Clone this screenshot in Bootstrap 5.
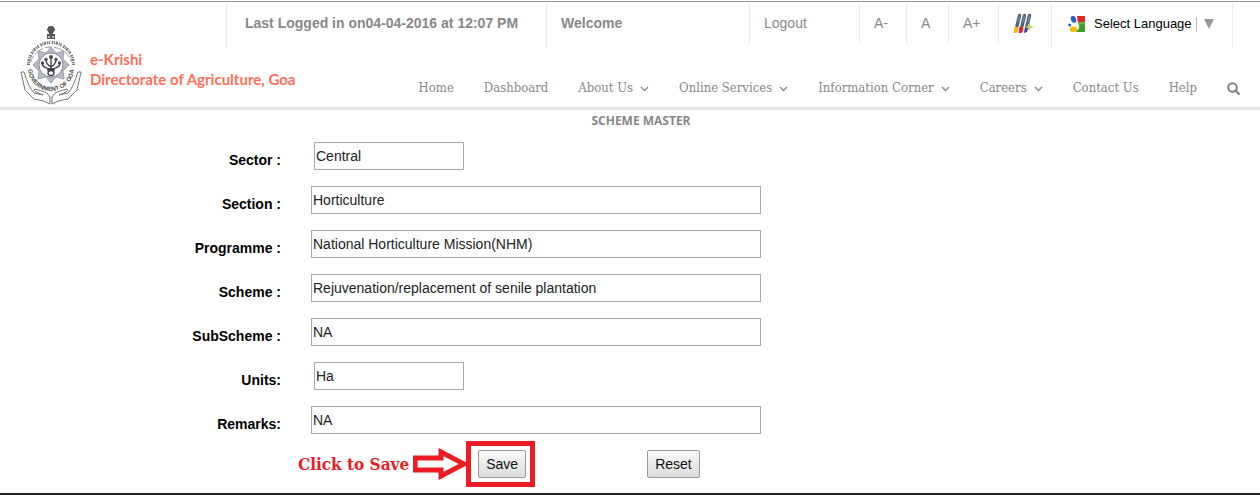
<!DOCTYPE html>
<html lang="en">
<head>
<meta charset="utf-8">
<meta name="viewport" content="width=device-width, initial-scale=1">
<title>e-Krishi - Scheme Master</title>
<link rel="stylesheet" href="https://cdn.jsdelivr.net/npm/bootstrap@5.3.0/dist/css/bootstrap.min.css">
<style>
body{font-family:"Liberation Sans",Arial,sans-serif;font-size:14px;line-height:20px;color:#000;background:#fff;padding-top:1px}
.page-frame{border-top:1px solid #999;border-bottom:2px solid #222;min-height:calc(100vh - 1px)}
.site-head{border-bottom:3px solid #e5e5e5}
.topbar{padding:1px 27px 0 0;height:45px;color:#888}
.top-cell{border-left:1px solid #eaeaea;padding:10px 14px 0;height:40px;flex-shrink:0;white-space:nowrap}
.top-cell.tall{height:45px}
.top-cell a{color:#888}
.top-cell.session{padding-left:18px;width:320px}
.welcome{width:203px}
.logout{width:110px}
.cell-small{width:47px}
.cell-normal{width:42px}
.cell-large{width:50px}
.cell-theme{width:53px}
.top-cell.language{width:182px;border-right:1px solid #eaeaea;padding-left:16px;padding-top:11px;font-size:13px}
.language .divider{width:1px;height:15px;background:#bbb;margin:0 7px 0 4px}
.brand{color:#ff7058;font:bold 15px/20px Lato,sans-serif;margin-top:-21px;padding-left:20px}
.brand:hover{color:#ff7058}
.brand-name{padding-top:23px}
.main-nav{font:13px/20px "DejaVu Serif Condensed","DejaVu Serif",serif;gap:30px;padding:31px 20px 9px 0}
.main-nav a{color:#888}
.main-nav svg{margin-left:7px}
.main-nav .search svg{margin:0}
.page-title{font:bold 12px/20px "Open Sans",sans-serif;color:#888;padding:1px 0 0 22px}
.scheme-form{padding:11px 4px 0 0}
.field-row{height:28px;margin-bottom:16px}
.field-row label{font-weight:bold;padding:8px 33px 0 0}
.field-row input{height:28px;border:1px solid #a9a9a9;padding:0 1px;width:150px;color:#222}
.field-row input.wide{width:450px;margin-left:-3px}
.plain-btn{height:28px;border:1px solid #999;border-radius:2px;background:linear-gradient(#f8f8f8,#ddd);color:#111;padding:0 7px}
.action-row{margin-top:-9px}
.action-group{margin-left:-16px}
.hint{color:#ed1c24;font:bold 17px/24px "DejaVu Serif Condensed","DejaVu Serif",serif}
.save-ring{border:5px solid #ed1c24;padding:4px 4px 4px 7px}
.reset{margin-left:112px}
</style>
<script src="https://cdn.jsdelivr.net/npm/bootstrap@5.3.0/dist/js/bootstrap.bundle.min.js"></script>
</head>
<body>
<div class="page-frame">
<header class="site-head">
  <div class="topbar d-flex justify-content-end">
    <div class="top-cell tall session fw-bold">Last Logged in on04-04-2016 at 12:07 PM</div>
    <div class="top-cell tall welcome fw-bold">Welcome</div>
    <div class="top-cell logout"><a href="#" class="text-decoration-none">Logout</a></div>
    <div class="top-cell cell-small"><a href="#" class="text-decoration-none">A-</a></div>
    <div class="top-cell cell-normal"><a href="#" class="text-decoration-none">A</a></div>
    <div class="top-cell cell-large"><a href="#" class="text-decoration-none">A+</a></div>
    <div class="top-cell cell-theme">
      <a href="#" aria-label="Themes"><svg width="20" height="20" viewBox="0 0 20 20" class="d-block">
        <g stroke-linecap="round" fill="none"><path d="M6.500 2.500 4 13M11.500 2.500 9 13M16.500 2.500 14 13" stroke="#4f6478" stroke-width="3.400"/><path d="M6.500 3 5 9M11.500 3 10 9M16.500 3 15 9" stroke="#7d91a3" stroke-width="1"/></g>
        <path d="M2 14l3 1-1 4-3 1z" fill="#f2b51d" stroke="#f2b51d"/><path d="M7 14l3 1-1 4-3 1z" fill="#e8232a" stroke="#e8232a"/><path d="M12 14l3 1-1 4-3 1z" fill="#3c3a9c"/>
        <path d="M16 11v6M13.500 14h6" stroke="#b5d46a" stroke-width="2"/>
      </svg></a>
    </div>
    <div class="top-cell tall language"><a href="#" class="d-flex align-items-center text-decoration-none text-black">
      <svg width="18" height="18" viewBox="0 0 18 18"><path d="M8 1h9v6h-7z" fill="#de2b25"/><path d="M10 7h7v10H8z" fill="#3a9c2b"/><path d="M10 7h7v3q-3-2-6 0z" fill="#67b83c"/><path d="M7 1h2q1 4-1 6 4 2 3 6-1 3-5 4H2l-1-5z" fill="#fff"/><ellipse cx="5.500" cy="4.300" rx="2.600" ry="3.600" transform="rotate(-20 5.500 4.300)" fill="#2864c8"/><ellipse cx="5.500" cy="14.200" rx="3.800" ry="2.700" fill="#f6b90c"/><circle cx="1.700" cy="10" r="1.500" fill="#2864c8"/></svg>
      <span class="ms-2">Select Language</span><span class="divider"></span>
      <svg width="10" height="10" viewBox="0 0 10 10"><path d="M0 0h10L5 10z" fill="#999"/></svg></a></div>
  </div>
  <div class="d-flex justify-content-between">
    <a href="#" class="brand d-flex text-decoration-none">
      <svg width="62" height="80" viewBox="0 0 62 80" aria-hidden="true">
        <defs><path id="motto" d="M8 42A23 23 0 0 0 54 42"/></defs>
        <g fill="#555"><path d="M28 1q3-2 6 0l1 3-2 3h-4l-2-3z"/><path d="M29 6h4v3h-4zM27 8h8v5h-8z"/><circle cx="29" cy="11" r="1" fill="#ddd"/><circle cx="33" cy="11" r="1" fill="#ddd"/></g>
        <path d="M8.500 39A22.500 22.500 0 0 1 53.500 39" fill="none" stroke="#777" stroke-width="3" stroke-dasharray="1.500 .7 1 .8 2 1 1 .7 1.500 1.800"/>
        <path d="M10.500 36A21.500 21.500 0 0 1 51.500 36" fill="none" stroke="#888" stroke-width=".8" stroke-dasharray="7 2 10 2"/>
        <path d="M31 21l5 6 8-2-1 8 6 6-6 6 1 8-8-2-5 6-5-6-8 2 1-8-6-6 6-6-1-8 8 2z" fill="#b8b8c6" stroke="#a0a0ae"/>
        <circle cx="31" cy="39" r="12" fill="#fff" stroke="#8a8a9c"/>
        <g fill="none" stroke="#383846" stroke-width="1.300"><path d="M31 30v13M31 43Q22 42 22 37M31 43Q40 42 40 37M31 41Q26 38 26 34M31 41Q36 38 36 34M27 44h8"/><ellipse cx="31" cy="47" rx="3" ry="2.500"/></g>
        <g fill="#484856"><circle cx="31" cy="31" r="2"/><circle cx="26" cy="33.500" r="1.700"/><circle cx="36" cy="33.500" r="1.700"/><circle cx="22.500" cy="37" r="1.700"/><circle cx="39.500" cy="37" r="1.700"/></g>
        <g fill="#fff" stroke="#777" stroke-linejoin="round"><path d="M30 78v-7q-2-5-8-6l-7-2q-2 1 1 3l7 3-9-2Q9 62 4 46L1 46l4 18 9 9q10 1 16 5z"/><path d="M32 78v-7q2-5 8-6l7-2q2 1-1 3l-7 3 9-2q5-5 10-21h3l-4 18-9 9q-10 1-16 5z"/></g>
        <text font-family="Liberation Sans" font-size="6" font-weight="bold" fill="#444"><textPath href="#motto" startOffset="50%" text-anchor="middle">GOVERNMENT OF GOA</textPath></text>
      </svg>
      <span class="brand-name ms-2">e-Krishi<br>Directorate of Agriculture, Goa</span>
    </a>
    <nav class="main-nav d-flex align-items-start text-nowrap" aria-label="Main">
      <a class="text-decoration-none" href="#">Home</a>
      <a class="text-decoration-none" href="#">Dashboard</a>
      <a class="text-decoration-none" href="#">About Us<svg width="9" height="6" viewBox="0 0 9 6"><path d="M1 1l3.500 3.500L8 1" fill="none" stroke="#888" stroke-width="1.300"/></svg></a>
      <a class="text-decoration-none" href="#">Online Services<svg width="9" height="6" viewBox="0 0 9 6"><path d="M1 1l3.500 3.500L8 1" fill="none" stroke="#888" stroke-width="1.300"/></svg></a>
      <a class="text-decoration-none" href="#">Information Corner<svg width="9" height="6" viewBox="0 0 9 6"><path d="M1 1l3.500 3.500L8 1" fill="none" stroke="#888" stroke-width="1.300"/></svg></a>
      <a class="text-decoration-none" href="#">Careers<svg width="9" height="6" viewBox="0 0 9 6"><path d="M1 1l3.500 3.500L8 1" fill="none" stroke="#888" stroke-width="1.300"/></svg></a>
      <a class="text-decoration-none" href="#">Contact Us</a>
      <a class="text-decoration-none" href="#">Help</a>
      <a class="search" href="#" aria-label="Search"><svg width="13" height="13" viewBox="0 0 13 13"><circle cx="5.500" cy="5.500" r="4.300" fill="none" stroke="#808080" stroke-width="2"/><path d="M8.500 8.500l3.500 3.500" stroke="#808080" stroke-width="2.200" stroke-linecap="round"/></svg></a>
    </nav>
  </div>
</header>
<main>
  <h1 class="page-title text-center m-0">SCHEME MASTER</h1>
  <form class="scheme-form">
    <div class="row g-0 field-row"><label for="sector" class="col-3 text-end">Sector :</label><div class="col-9"><input id="sector" type="text" value="Central"></div></div>
    <div class="row g-0 field-row"><label for="section" class="col-3 text-end">Section :</label><div class="col-9"><input id="section" class="wide" type="text" value="Horticulture"></div></div>
    <div class="row g-0 field-row"><label for="programme" class="col-3 text-end">Programme :</label><div class="col-9"><input id="programme" class="wide" type="text" value="National Horticulture Mission(NHM)"></div></div>
    <div class="row g-0 field-row"><label for="scheme" class="col-3 text-end">Scheme :</label><div class="col-9"><input id="scheme" class="wide" type="text" value="Rejuvenation/replacement of senile plantation"></div></div>
    <div class="row g-0 field-row"><label for="subscheme" class="col-3 text-end">SubScheme :</label><div class="col-9"><input id="subscheme" class="wide" type="text" value="NA"></div></div>
    <div class="row g-0 field-row"><label for="units" class="col-3 text-end">Units:</label><div class="col-9"><input id="units" type="text" value="Ha"></div></div>
    <div class="row g-0 field-row"><label for="remarks" class="col-3 text-end">Remarks:</label><div class="col-9"><input id="remarks" class="wide" type="text" value="NA"></div></div>
    <div class="row g-0 action-row"><div class="col-9 offset-3"><div class="action-group d-flex align-items-center">
      <span class="hint me-1">Click to Save</span>
      <svg width="53" height="32" viewBox="0 0 53 32" aria-hidden="true"><path d="M2 10h26V4l23 12-23 12v-6H2z" fill="#fff" stroke="#ed1c24" stroke-width="5"/></svg>
      <div class="save-ring"><button type="submit" class="plain-btn d-block">Save</button></div>
      <button type="reset" class="plain-btn reset">Reset</button>
    </div></div></div>
  </form>
</main>
</div>
</body>
</html>
